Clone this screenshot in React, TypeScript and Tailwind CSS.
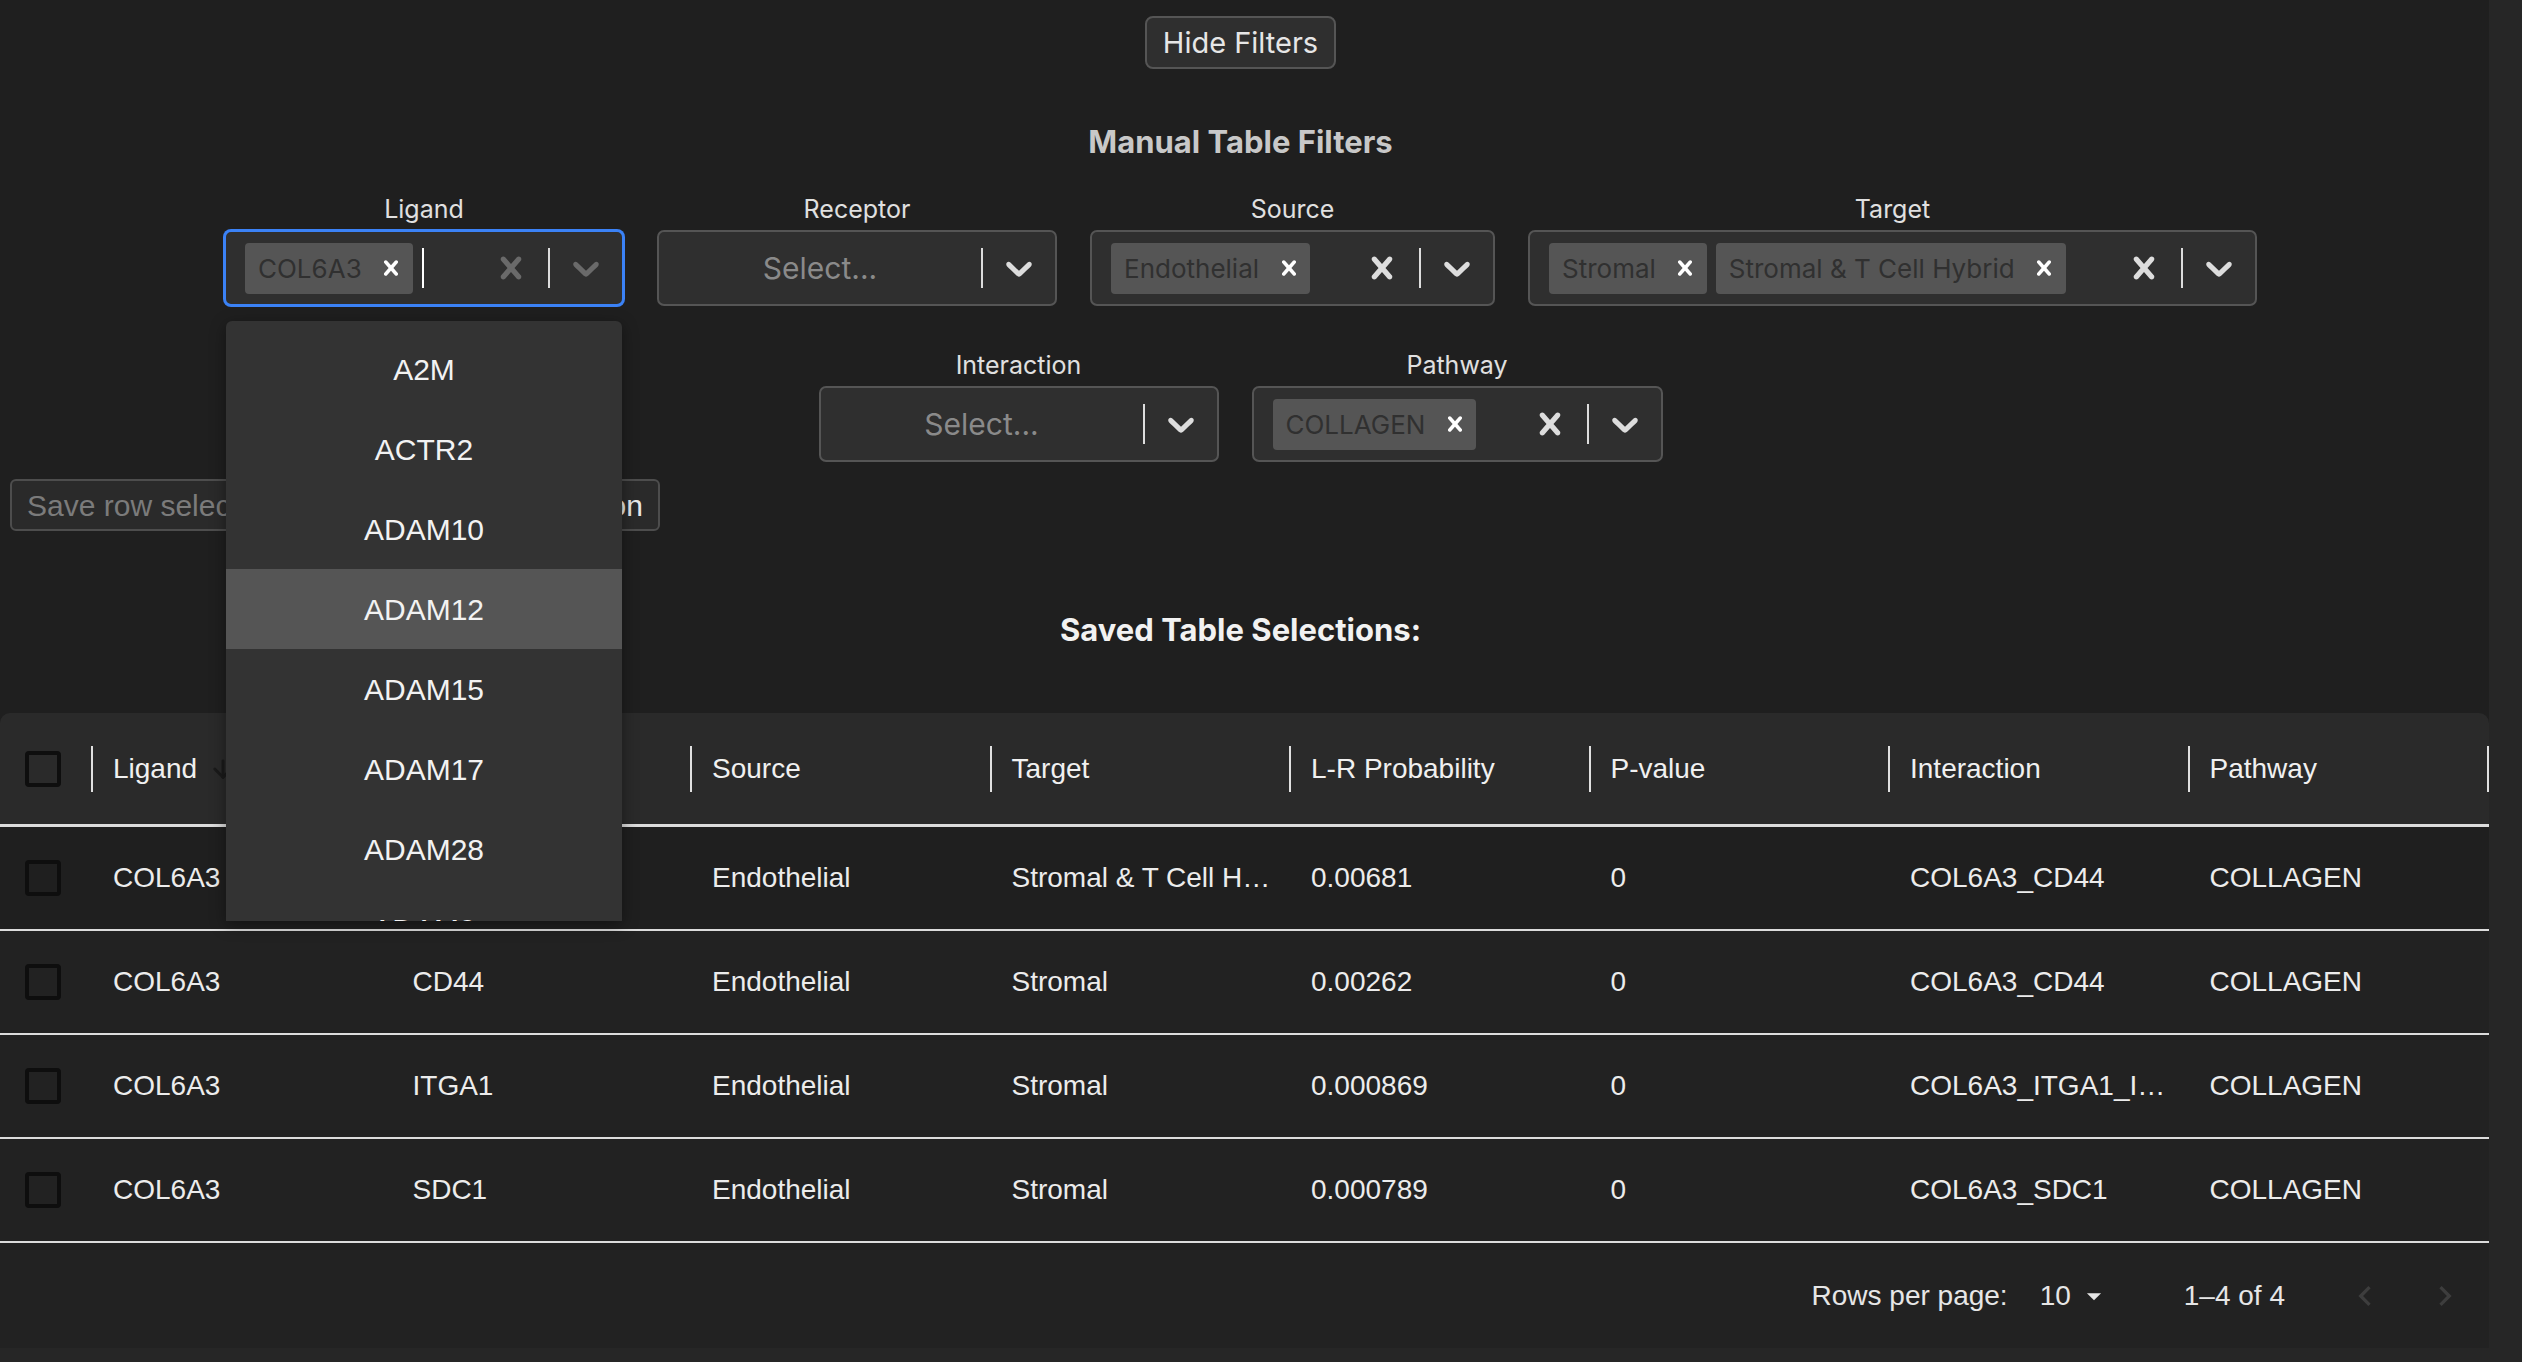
import { ArrowDown } from 'lucide-react'
import type { ReactNode } from 'react'

// react-select style icons
function CrossIcon({ className }: { className?: string }) {
  return (
    <svg viewBox="0 0 20 20" className={className} fill="currentColor">
      <path d="M14.348 14.849c-0.469 0.469-1.229 0.469-1.697 0l-2.651-3.030-2.651 3.029c-0.469 0.469-1.229 0.469-1.697 0-0.469-0.469-0.469-1.229 0-1.697l2.758-3.15-2.759-3.152c-0.469-0.469-0.469-1.228 0-1.697s1.228-0.469 1.697 0l2.652 3.031 2.651-3.031c0.469-0.469 1.228-0.469 1.697 0s0.469 1.229 0 1.697l-2.758 3.152 2.758 3.15c0.469 0.469 0.469 1.229 0 1.698z" />
    </svg>
  )
}

function ChevronIcon({ className }: { className?: string }) {
  return (
    <svg viewBox="0 0 20 20" className={className} fill="currentColor">
      <path d="M4.516 7.548c0.436-0.446 1.043-0.481 1.576 0l3.908 3.747 3.908-3.747c0.533-0.481 1.141-0.446 1.574 0 0.436 0.445 0.408 1.197 0 1.615-0.406 0.418-4.695 4.502-4.695 4.502-0.217 0.223-0.502 0.335-0.787 0.335s-0.57-0.112-0.789-0.335c0 0-4.287-4.084-4.695-4.502s-0.436-1.17 0-1.615z" />
    </svg>
  )
}

type FilterSelectProps = {
  label: string
  width: string
  chips?: string[]
  focused?: boolean
  children?: ReactNode
}

function FilterSelect({ label, width, chips = [], focused = false, children }: FilterSelectProps) {
  const hasValue = chips.length > 0
  return (
    <div className={`flex flex-col items-center ${width}`}>
      <span className="text-[25px] leading-[30px] text-[#e0e0e0]">{label}</span>
      <div
        className={`relative mt-[6px] flex h-[76px] w-full items-center rounded-[7px] border-2 bg-[#2f2f2f] ${
          focused ? 'border-[#3b82f6] shadow-[0_0_0_1px_#3b82f6]' : 'border-[#555555]'
        }`}
      >
        {hasValue ? (
          <div className="flex min-w-0 flex-1 items-center gap-[9px] pl-[19px]">
            {chips.map((chip) => (
              <div key={chip} className="flex h-[51px] items-center rounded-[4px] bg-[#555555]">
                <span className="whitespace-nowrap pl-[13px] pr-[8px] text-[26px] text-[#303030]">{chip}</span>
                <span className="flex h-full w-[43px] items-center justify-center text-white">
                  <CrossIcon className="h-[30px] w-[30px]" />
                </span>
              </div>
            ))}
            {focused && <span className="h-[40px] w-[2px] bg-white" />}
          </div>
        ) : (
          <span className="flex-1 text-center text-[30px] text-[#8a8a8a]">Select...</span>
        )}
        {hasValue && (
          <span className={`flex w-[74px] justify-center ${focused ? 'text-[#6a6a6a]' : 'text-[#dddddd]'}`}>
            <CrossIcon className="h-[44px] w-[44px]" />
          </span>
        )}
        <span className="h-[40px] w-[2px] bg-[#dddddd]" />
        <span className={`flex w-[72px] justify-center ${focused ? 'text-[#6a6a6a]' : 'text-[#dddddd]'}`}>
          <ChevronIcon className="h-[44px] w-[44px]" />
        </span>
        {children}
      </div>
    </div>
  )
}

const ligandOptions = ['A2M', 'ACTR2', 'ADAM10', 'ADAM12', 'ADAM15', 'ADAM17', 'ADAM28', 'ADAM9']

function LigandMenu() {
  return (
    <div className="absolute left-0 top-full z-20 mt-[17px] h-[600px] w-full overflow-hidden rounded-t-[6px] bg-[#333333] pt-[8px] font-['Liberation_Sans',Arial,sans-serif] shadow-[0_4px_16px_rgba(0,0,0,0.4)]">
      {ligandOptions.map((opt) => (
        <div
          key={opt}
          className={`flex h-[80px] items-center justify-center text-[30px] text-[#f2f2f2] ${
            opt === 'ADAM12' ? 'bg-[#555555]' : ''
          }`}
        >
          {opt}
        </div>
      ))}
    </div>
  )
}

const columns = ['Ligand', 'Receptor', 'Source', 'Target', 'L-R Probability', 'P-value', 'Interaction', 'Pathway']

const rows = [
  ['COL6A3', 'CD44', 'Endothelial', 'Stromal & T Cell Hybrid', '0.00681', '0', 'COL6A3_CD44', 'COLLAGEN'],
  ['COL6A3', 'CD44', 'Endothelial', 'Stromal', '0.00262', '0', 'COL6A3_CD44', 'COLLAGEN'],
  ['COL6A3', 'ITGA1', 'Endothelial', 'Stromal', '0.000869', '0', 'COL6A3_ITGA1_ITGB1', 'COLLAGEN'],
  ['COL6A3', 'SDC1', 'Endothelial', 'Stromal', '0.000789', '0', 'COL6A3_SDC1', 'COLLAGEN'],
]

function Checkbox() {
  return <span className="ml-[25px] block h-[36px] w-[36px] rounded-[4px] border-[4px] border-[#0e0e0e]" />
}

function SavedTable() {
  return (
    <div className="w-full font-['Liberation_Sans',Arial,sans-serif] text-[28px]">
      {/* header */}
      <div className="grid h-[114px] grid-cols-[93px_repeat(8,minmax(0,1fr))] rounded-t-[10px] border-b-[3px] border-[#dcdcdc] bg-[#2a2a2a] text-[#f0f0f0]">
        <div className="flex items-center">
          <Checkbox />
          <span className="ml-auto h-[46px] w-[2px] bg-[#e0e0e0]" />
        </div>
        {columns.map((col) => (
          <div key={col} className="flex min-w-0 items-center">
            <div className="flex min-w-0 flex-1 items-center pl-[20px]">
              <span className="whitespace-nowrap">{col}</span>
              {col === 'Ligand' && <ArrowDown className="ml-[12px] h-[28px] w-[28px] text-[#1a1a1a]" strokeWidth={2.5} />}
            </div>
            <span className="h-[46px] w-[2px] bg-[#e0e0e0]" />
          </div>
        ))}
      </div>

      {/* body */}
      {rows.map((row, i) => (
        <div
          key={i}
          className={`grid h-[104px] grid-cols-[93px_repeat(8,minmax(0,1fr))] border-b-2 border-[#dcdcdc] text-[#ececec] ${
            i === 0 ? 'bg-[#1f1f1f]' : 'bg-[#222222]'
          }`}
        >
          <div className="flex items-center">
            <Checkbox />
          </div>
          {row.map((cell, j) => (
            <div key={j} className="flex min-w-0 items-center pl-[20px] pr-[14px]">
              <span className="truncate">{cell}</span>
            </div>
          ))}
        </div>
      ))}

      {/* pagination */}
      <div className="flex h-[105px] items-center justify-end bg-[#222222] pr-[24px] text-[#e6e6e6]">
        <span>Rows per page:</span>
        <span className="ml-[32px]">10</span>
        <svg viewBox="0 0 24 24" className="ml-[6px] h-[34px] w-[34px]" fill="#e6e6e6">
          <path d="M7 10l5 5 5-5z" />
        </svg>
        <span className="ml-[73px]">1–4 of 4</span>
        <svg viewBox="0 0 24 24" className="ml-[60px] h-[40px] w-[40px]" fill="#3d3d3d">
          <path d="M15.41 16.59 10.83 12l4.58-4.59L14 6l-6 6 6 6 1.41-1.41z" />
        </svg>
        <svg viewBox="0 0 24 24" className="ml-[40px] h-[40px] w-[40px]" fill="#3d3d3d">
          <path d="M8.59 16.59 13.17 12 8.59 7.41 10 6l6 6-6 6-1.41-1.41z" />
        </svg>
      </div>
    </div>
  )
}

export default function App() {
  return (
    <div className="flex h-screen w-full overflow-hidden bg-[#1f1f1f] font-['Inter',sans-serif]">
      <div className="flex min-w-0 flex-1 flex-col">
        {/* Filters */}
        <div className="flex flex-col items-center pr-[8px] pt-[16px]">
          <button className="h-[53px] rounded-[8px] border-2 border-[#555555] bg-[#2f2f2f] px-[16px] text-[29px] leading-none text-[#e6e6e6]">
            Hide Filters
          </button>
          <h2 className="mt-[55px] text-[31px] font-bold leading-[36px] text-[#c8c8c8]">Manual Table Filters</h2>

          <div className="mt-[34px] flex gap-[33px]">
            <FilterSelect label="Ligand" width="w-[400px]" chips={['COL6A3']} focused>
              <LigandMenu />
            </FilterSelect>
            <FilterSelect label="Receptor" width="w-[400px]" />
            <FilterSelect label="Source" width="w-[405px]" chips={['Endothelial']} />
            <FilterSelect label="Target" width="w-[729px]" chips={['Stromal', 'Stromal & T Cell Hybrid']} />
          </div>

          <div className="mt-[44px] flex gap-[33px]">
            <FilterSelect label="Interaction" width="w-[400px]" />
            <FilterSelect label="Pathway" width="w-[411px]" chips={['COLLAGEN']} />
          </div>
        </div>

        {/* Save selection */}
        <div className="ml-[10px] mt-[17px] flex h-[52px] w-[650px] gap-[4px] font-['Liberation_Sans',Arial,sans-serif] text-[30px]">
          <input
            readOnly
            placeholder="Save row selection name"
            className="min-w-0 flex-1 rounded-[6px] border-2 border-[#4d4d4d] bg-[#2a2a2a] pl-[15px] text-[#e8e8e8] outline-none placeholder:text-[#7b7b7b]"
          />
          <button className="rounded-[6px] border-2 border-[#4d4d4d] bg-[#2a2a2a] px-[15px] text-[#e8e8e8]">
            Save Selection
          </button>
        </div>

        <h2 className="mt-[81px] pr-[8px] text-center text-[31px] font-bold leading-[36px] text-[#f2f2f2]">
          Saved Table Selections:
        </h2>

        <div className="mt-[65px]">
          <SavedTable />
        </div>
        <div className="flex-1 bg-[#262626]" />
      </div>
      {/* scrollbar track */}
      <div className="w-[33px] shrink-0 bg-[#262626]" />
    </div>
  )
}
